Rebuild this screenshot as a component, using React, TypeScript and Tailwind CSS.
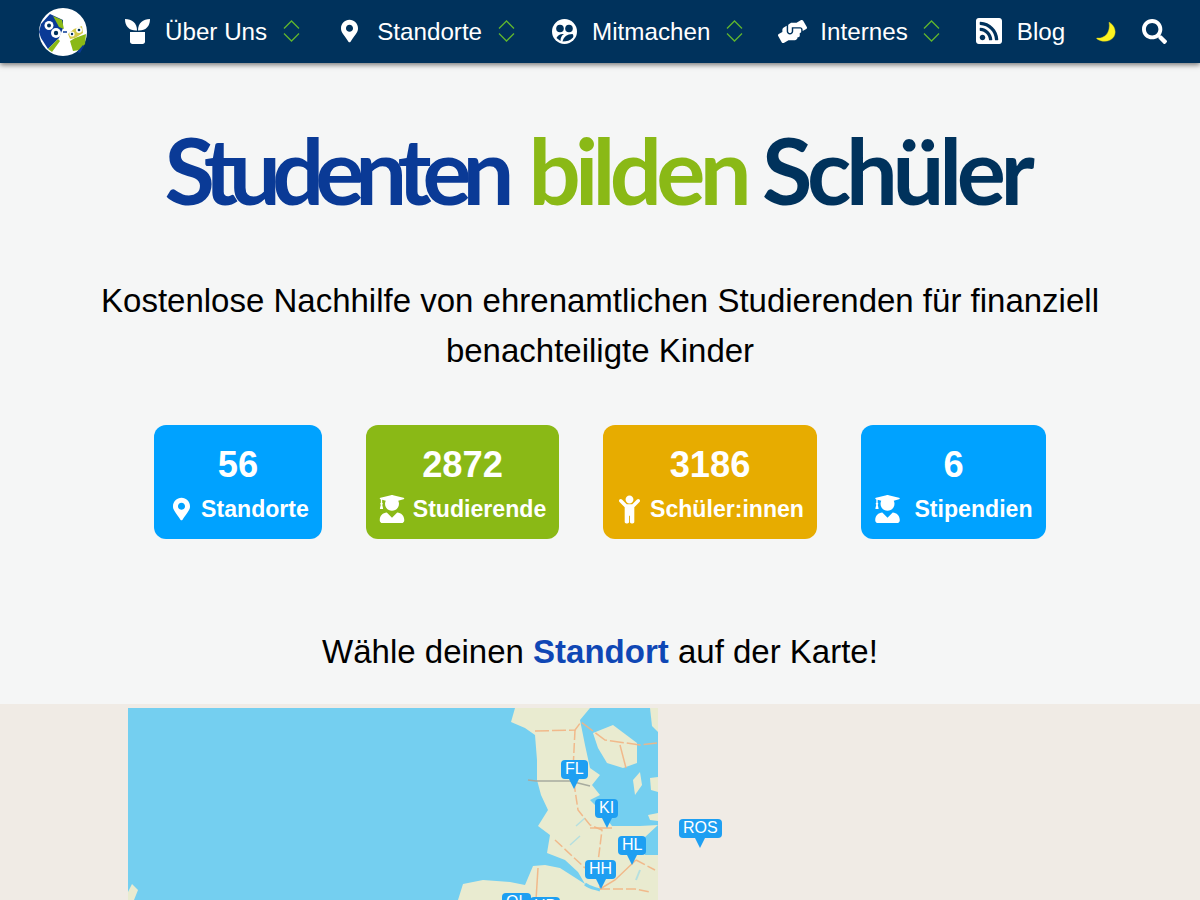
import { FaChild, FaHandsHelping, FaMapMarkerAlt, FaRssSquare, FaSearch, FaUserGraduate } from 'react-icons/fa'

function Logo() {
  return (
    <svg width="48" height="48" viewBox="0 0 48 48" className="shrink-0">
      <circle cx="24" cy="24" r="24" fill="#fff" />
      <path d="M11 6L24 12 24 20 20 30 9 41 2 30 0 24 2 16Z" fill="#0a3a96" />
      <path d="M14 8L23 12 25 21 20 19Z" fill="#8ab916" />
      <path d="M9 41L19 31 21 33 13 44Z" fill="#8ab916" />
      <circle cx="10" cy="17.500" r="4.500" fill="#fff" />
      <circle cx="10" cy="17.500" r="2" fill="#00325c" />
      <circle cx="17" cy="25" r="5" fill="#fff" />
      <circle cx="17" cy="25" r="2.200" fill="#00325c" />
      <path d="M36 30L47 26 46 36 41 42 34 43 31 33Z" fill="#8ab916" />
      <path d="M29 26L35 21 43 18 44 25 36 30 31 31Z" fill="#d5c94a" />
      <circle cx="33" cy="26" r="2.600" fill="#fff" />
      <circle cx="33" cy="26" r="1.200" fill="#00325c" />
      <circle cx="40" cy="22" r="3" fill="#fff" />
      <circle cx="40" cy="22" r="1.300" fill="#00325c" />
      <path d="M38 44L44 37 45 38 41 45Z" fill="#0a3a96" />
      <path d="M24 24L28 24" stroke="#0a3a96" strokeWidth="1.500" />
    </svg>
  )
}

function Chevrons() {
  return (
    <svg width="17" height="22" viewBox="0 0 17 22" fill="none" stroke="#5fb52e" strokeWidth="1.300" className="shrink-0">
      <path d="M1 8.500L8.500 1 16 8.500" />
      <path d="M1 13.500L8.500 21 16 13.500" />
    </svg>
  )
}

function PlantIcon() {
  return (
    <svg width="25" height="25" viewBox="0 0 25 25" fill="#fff" className="shrink-0">
      <path d="M0 0C7 0 12 4 12 11.500 5 12 0 8 0 0Z" />
      <path d="M25 0C18 0 13 4 13 11.500 20 12 25 8 25 0Z" />
      <path d="M5 13H20V22.500C20 24 19 25 17.500 25H7.500C6 25 5 24 5 22.500Z" />
    </svg>
  )
}

function PeopleIcon() {
  return (
    <svg width="25" height="25" viewBox="0 0 25 25" className="shrink-0">
      <circle cx="12.500" cy="12.500" r="12.500" fill="#fff" />
      <circle cx="8" cy="9.500" r="3.800" fill="#00325c" />
      <circle cx="17" cy="9.500" r="3.800" fill="#00325c" />
      <path d="M4.500 19C6 15.500 9 14.500 12 15 9.500 16.500 8.500 19 8.500 22Z" fill="#00325c" />
      <path d="M10.500 22.500C11.500 18 15 15 20.500 15 21.500 16 21.500 17.500 21 18.500 18 21.500 15 22.500 10.500 22.500Z" fill="#00325c" />
    </svg>
  )
}

function MoonIcon() {
  return (
    <svg width="20" height="20" viewBox="0 0 20 20" className="shrink-0">
      <path d="M13 0C18 3 21 9 18 14.500 15 19.500 7 21 1 17 0.500 16.500 0.500 16 1 16 8 17 15 11 13 0Z" fill="#fdf31f" stroke="#d8cf1a" strokeWidth="0.400" />
    </svg>
  )
}

function Map() {
  return (
    <svg width="530" height="192" viewBox="128 708 530 192" className="ml-[128px] mt-[4px] block blur-[0.5px]">
      <rect x="128" y="708" width="530" height="192" fill="#74cff0" />
      {/* Jutland, Schleswig-Holstein and the coast south of the Elbe */}
      <path
        fill="#e9ebd0"
        d="M515 708L511 722 525 728 535 735 537 760 537 780 541 795 548 810 538 826 550 835 547 853 565 860 578 872 585 884 560 868 545 865 533 866 525 885 510 882 483 880 463 884 458 900 658 900 658 855 645 855 644 838 658 825 640 826 612 826 600 810 590 800 600 795 592 785 600 775 590 768 585 745 580 720 590 708Z"
      />
      {/* Islands */}
      <path fill="#e9ebd0" d="M593 733L613 725 637 743 637 763 623 768 607 763 598 748Z" />
      <path fill="#e9ebd0" d="M650 708L658 708 658 732 652 726Z" />
      <path fill="#e9ebd0" d="M648 815L658 813 658 821 650 820Z" />
      <path fill="#e9ebd0" d="M650 778L658 777 658 792 651 790Z" />
      <path fill="#e9ebd0" d="M633 780L640 772 642 785 635 795Z" />
      <path fill="#e9ebd0" d="M128 892L132 884 138 890 134 900 128 900Z" />
      {/* Elbe, canal and lakes */}
      <path d="M585 884C590 888 594 888 600 890" fill="none" stroke="#74cff0" strokeWidth="3" />
      <path d="M585 818L576 826M580 836L570 845" fill="none" stroke="#b5dfdf" strokeWidth="1.500" />
      <path d="M636 880L640 870" fill="none" stroke="#b5dfdf" strokeWidth="2" />
      {/* Roads */}
      <g fill="none" stroke="#f2b483" strokeWidth="1.500" strokeOpacity="0.9">
        <path d="M535 731L575 730 581 722 605 740 640 745 657 743" strokeDasharray="14 3" />
        <path d="M575 730L573 770 575 790 578 810 590 825 602 830 597 870 600 888" strokeDasharray="10 3" />
        <path d="M620 745L626 768M590 828L612 828" />
        <path d="M555 840L585 868M636 860L655 870M600 889L635 889 650 892" strokeDasharray="10 3" />
        <path d="M636 860L615 880 600 889M538 868L536 900" />
      </g>
      <path d="M528 780L536 781 570 781 590 786" fill="none" stroke="#a7ab9f" strokeWidth="1.500" />
    </svg>
  )
}

function Marker({ label, className }: { label: string; className: string }) {
  return (
    <div className={`absolute flex flex-col items-center ${className}`}>
      <span className="h-[19px] rounded-[4px] bg-[#1e9ff2] px-1 text-[16px] leading-[17px] text-white">{label}</span>
      <span className="h-0 w-0 border-x-[5px] border-t-[10px] border-x-transparent border-t-[#1e9ff2]" />
    </div>
  )
}

const stats = [
  { value: '56', label: 'Standorte', bg: 'bg-[#00a2ff]', width: 'w-[168px]', gap: 'gap-[11px]', icon: <FaMapMarkerAlt size={24} className="ml-[6px] w-[17px]" /> },
  { value: '2872', label: 'Studierende', bg: 'bg-[#8ab916]', width: 'w-[193px]', gap: 'gap-[8px]', icon: <FaUserGraduate size={28} className="w-[26px]" /> },
  { value: '3186', label: 'Schüler:innen', bg: 'bg-[#e7ac00]', width: 'w-[214px]', gap: 'gap-[10px]', icon: <FaChild size={29} className="ml-[3px] w-[21px]" /> },
  { value: '6', label: 'Stipendien', bg: 'bg-[#00a2ff]', width: 'w-[185px]', gap: 'gap-[14px]', icon: <FaUserGraduate size={28} className="ml-[1px] w-[25px]" /> },
]

export default function App() {
  return (
    <div className="h-[900px] overflow-hidden bg-[#f5f6f6] font-['Liberation_Sans',Arial,sans-serif] text-black">
      {/* Navbar */}
      <nav className="relative z-10 flex h-[63px] items-center bg-[#00325c] pl-[39px] text-[24.200px] text-white shadow-[0_2px_5px_rgba(0,0,0,0.5)]">
        <Logo />
        <div className="ml-[38px] flex items-center gap-[15px]">
          <PlantIcon />
          <span className="pt-[2px]">Über Uns</span>
          <span className="ml-[1px]"><Chevrons /></span>
        </div>
        <div className="ml-[41px] flex items-center gap-[19px]">
          <FaMapMarkerAlt size={24} className="w-[17px]" />
          <span className="pt-[2px]">Standorte</span>
          <span className="-ml-[3px]"><Chevrons /></span>
        </div>
        <div className="ml-[37px] flex items-center gap-[15px]">
          <PeopleIcon />
          <span className="pt-[2px]">Mitmachen</span>
          <span className="ml-[1px]"><Chevrons /></span>
        </div>
        <div className="ml-[35px] flex items-center gap-[13px]">
          <FaHandsHelping size={29} />
          <span className="pt-[2px]">Internes</span>
          <span className="ml-[2px]"><Chevrons /></span>
        </div>
        <div className="ml-[36px] flex items-center gap-[15px]">
          <FaRssSquare size={30} className="w-[26px]" />
          <span className="pt-[2px]">Blog</span>
        </div>
        <div className="ml-[31px]"><MoonIcon /></div>
        <FaSearch size={25} className="ml-[26px]" />
      </nav>

      {/* Title */}
      <h1 className="mt-[47px] flex h-[120px] items-center justify-center pr-[6px] font-['Lato',sans-serif] text-[92px] font-bold">
        <span className="tracking-[-9px] text-[#0a3a96]">Studenten</span>
        <span className="ml-[23px] tracking-[-5.700px] text-[#8ab916]">bilden</span>
        <span className="ml-[16px] tracking-[-5.300px] text-[#00325c]">Schüler</span>
      </h1>

      <p className="mx-auto mt-[46px] max-w-[1020px] text-center text-[33px] leading-[50px]">
        Kostenlose Nachhilfe von ehrenamtlichen Studierenden für finanziell benachteiligte Kinder
      </p>

      {/* Stats */}
      <div className="mt-[49px] flex justify-center gap-[44px]">
        {stats.map((s) => (
          <div key={s.label} className={`flex h-[114px] flex-col items-center rounded-[12px] text-white ${s.bg} ${s.width}`}>
            <span className="mt-[19px] text-[36.300px] font-bold leading-[42px]">{s.value}</span>
            <span className={`mt-[8px] flex items-center text-[23.100px] font-bold leading-[30px] ${s.gap}`}>
              {s.icon}
              {s.label}
            </span>
          </div>
        ))}
      </div>

      <h2 className="mt-[88px] text-center text-[33px] leading-[50px]">
        Wähle deinen <strong className="font-bold text-[#0f47b5]">Standort</strong> auf der Karte!
      </h2>

      {/* Map */}
      <div className="relative mt-[27px] h-[196px] overflow-hidden bg-[#f0ebe5]">
        <Map />
        <Marker label="FL" className="left-[561px] top-[56px]" />
        <Marker label="KI" className="left-[595px] top-[95px]" />
        <Marker label="HL" className="left-[618px] top-[132px]" />
        <Marker label="HH" className="left-[585px] top-[156px]" />
        <Marker label="ROS" className="left-[679px] top-[115px]" />
        <Marker label="OL" className="left-[502px] top-[189px]" />
        <Marker label="HB" className="left-[530px] top-[193px]" />
      </div>
    </div>
  )
}
